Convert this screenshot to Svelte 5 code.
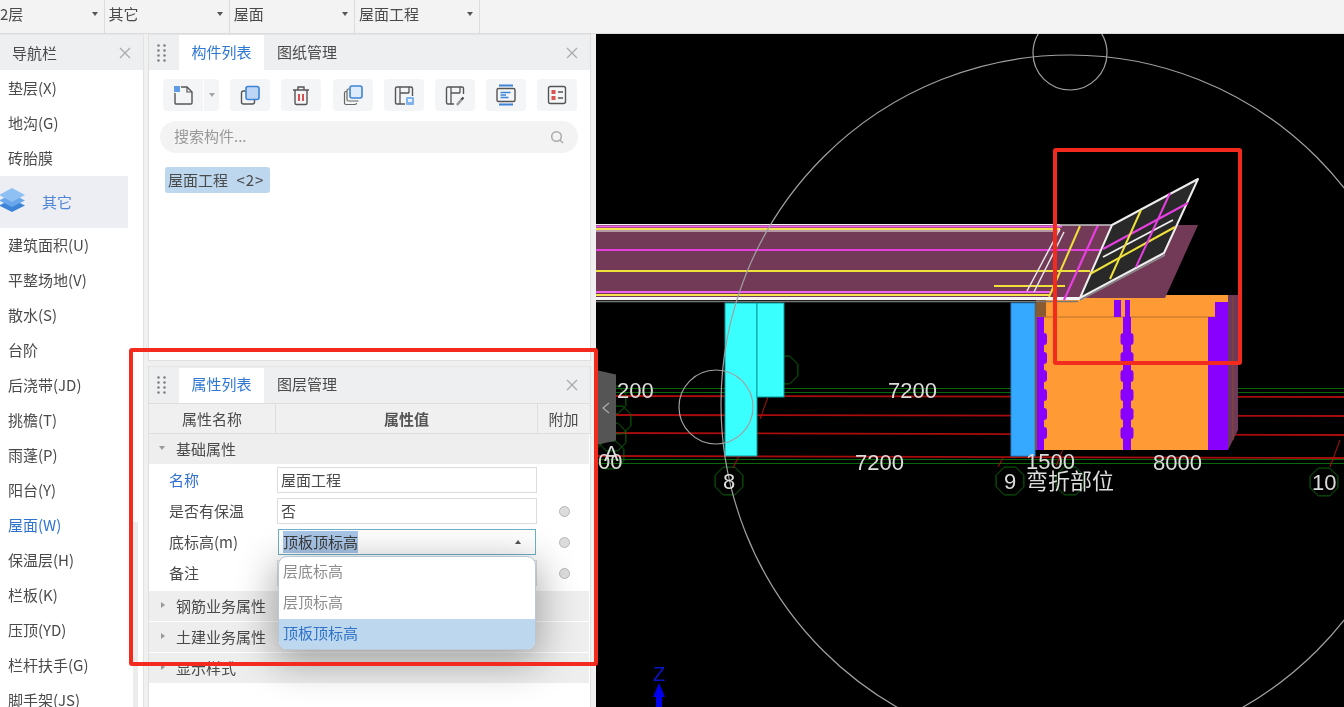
<script>
  const selectors = ['2层', '其它', '屋面', '屋面工程'];
  const navTop = ['垫层(X)', '地沟(G)', '砖胎膜'];
  const navBottom = ['建筑面积(U)', '平整场地(V)', '散水(S)', '台阶', '后浇带(JD)', '挑檐(T)', '雨蓬(P)', '阳台(Y)', '屋面(W)', '保温层(H)', '栏板(K)', '压顶(YD)', '栏杆扶手(G)', '脚手架(JS)'];
  const lowerSections = ['钢筋业务属性', '土建业务属性', '显示样式'];
  const options = ['层底标高', '层顶标高', '顶板顶标高'];
  const beads = [333, 352, 370, 389, 408, 427];
  const redLines = [[396, 397], [415, 416], [433, 435], [456, 458]];
  const greenLines = [388.5, 392.5, 459.5, 463.5];
  const hexagons = [[612, 400], [617, 420], [612, 437], [610, 455], [784, 370], [729, 481], [1010, 481], [1070, 481], [1324, 482]];
  const hexPoints = ([cx, cy]) => Array.from({ length: 8 }, (_, i) => {
    const a = (Math.PI / 4) * i + Math.PI / 8;
    return `${(cx + 15 * Math.cos(a)).toFixed(1)},${(cy + 15 * Math.sin(a)).toFixed(1)}`;
  }).join(' ');
  const gripDots = [0, 1, 2, 3].flatMap((r) => [0, 1].map((c) => [1.5 + c * 6, 1.5 + r * 5]));
</script>

{#snippet closeIcon()}
  <svg class="close" width="12" height="12" viewBox="0 0 12 12" fill="none"><path d="M1 1l10 10M11 1L1 11" stroke="#aaa" stroke-width="1.3"/></svg>
{/snippet}

{#snippet grip()}
  <span class="grip">
    <svg width="9" height="18" viewBox="0 0 9 18">
      {#each gripDots as [x, y]}<circle cx={x} cy={y} r="1.3" fill="#808080"/>{/each}
    </svg>
  </span>
{/snippet}

<div class="app">
  <header class="selectors">
    {#each selectors as name, i}
      <div class="selector" class:first={i === 0}>
        <span>{name}</span><i class="arrow"></i>
      </div>
    {/each}
  </header>

  <div class="workspace">
    <nav class="nav">
      <div class="nav-head"><span>导航栏</span>{@render closeIcon()}</div>
      <ul>
        {#each navTop as item}<li>{item}</li>{/each}
        <li class="group">
          <svg width="28" height="28" viewBox="0 0 28 28" class="layers">
            <path d="M12 12 L25 18.5 L12 25 L-1 18.5Z" fill="#3d84d8"/>
            <path d="M12 7 L25 13.5 L12 20 L-1 13.5Z" fill="#6aa6ea"/>
            <path d="M12 1 L25 8 L12 15 L-1 8Z" fill="#8fc0f3"/>
          </svg>
          <span>其它</span>
        </li>
        {#each navBottom as item}
          <li class:current={item === '屋面(W)'}>{item}</li>
        {/each}
      </ul>
      <div class="scroll-thumb"></div>
    </nav>

    <div class="panels">
      <section class="panel upper">
        <div class="panel-head">
          {@render grip()}
          <span class="tab active">构件列表</span>
          <span class="tab">图纸管理</span>
          {@render closeIcon()}
        </div>
        <div class="tools">
          <div class="tool split">
            <span class="tool-main">
              <svg width="22" height="22" viewBox="0 0 22 22" fill="none">
                <path d="M9 3h6l5 5v11a1 1 0 0 1-1 1H4a1 1 0 0 1-1-1V9" stroke="#555" stroke-width="1.4"/>
                <path d="M15 3v5h5" stroke="#555" stroke-width="1.2"/>
                <rect x="2" y="2" width="6" height="6" fill="#5f9be6"/>
              </svg>
            </span>
            <span class="tool-drop"><i class="arrow gray"></i></span>
          </div>
          <div class="tool">
            <svg width="22" height="22" viewBox="0 0 22 22" fill="none">
              <rect x="2.5" y="7" width="13" height="13" rx="2" stroke="#555" stroke-width="1.4"/>
              <rect x="7" y="2.5" width="13" height="13" rx="2" fill="#bdd6f5" stroke="#3d84d8" stroke-width="1.6"/>
            </svg>
          </div>
          <div class="tool">
            <svg width="22" height="22" viewBox="0 0 22 22" fill="none">
              <path d="M3 6h16M8 6V3h6v3M5 6v13a1.5 1.5 0 0 0 1.5 1.5h9A1.5 1.5 0 0 0 17 19V6" stroke="#555" stroke-width="1.4"/>
              <path d="M9 10v7M13 10v7" stroke="#d33f3f" stroke-width="1.8"/>
            </svg>
          </div>
          <div class="tool">
            <svg width="22" height="22" viewBox="0 0 22 22" fill="none">
              <path d="M5 7.5H4A1.5 1.5 0 0 0 2.5 9v10A1.5 1.5 0 0 0 4 20.5h9a1.5 1.5 0 0 0 1.5-1.5" stroke="#666" stroke-width="1.2"/>
              <path d="M7.5 5H6.5A1.5 1.5 0 0 0 5 6.5v9A1.5 1.5 0 0 0 6.5 17h10" stroke="#666" stroke-width="1.2"/>
              <rect x="8" y="2" width="12" height="12" rx="2" fill="#deebfb" stroke="#3d84d8" stroke-width="1.6"/>
            </svg>
          </div>
          <div class="tool">
            <svg width="22" height="22" viewBox="0 0 22 22" fill="none">
              <path d="M12 20H4a1.5 1.5 0 0 1-1.5-1.5v-14A1.5 1.5 0 0 1 4 3h14a1.5 1.5 0 0 1 1.5 1.5V12" stroke="#555" stroke-width="1.4"/>
              <path d="M7 3v17M7 9h9M16 3v6" stroke="#555" stroke-width="1.3"/>
              <rect x="13" y="13" width="8" height="8" rx="1" fill="#7fb2ee"/>
              <rect x="15" y="15" width="4" height="3" fill="#e8f1fc"/>
            </svg>
          </div>
          <div class="tool">
            <svg width="22" height="22" viewBox="0 0 22 22" fill="none">
              <path d="M10 20H4a1.5 1.5 0 0 1-1.5-1.5v-14A1.5 1.5 0 0 1 4 3h14a1.5 1.5 0 0 1 1.5 1.5V10" stroke="#555" stroke-width="1.4"/>
              <path d="M7 3v17M7 9h9M16 3v6" stroke="#555" stroke-width="1.3"/>
              <path d="M13 21l5-6" stroke="#9a9a9a" stroke-width="2.6"/>
              <path d="M17.5 15.5l2-2" stroke="#444" stroke-width="2.2"/>
            </svg>
          </div>
          <div class="tool">
            <svg width="22" height="22" viewBox="0 0 22 22" fill="none">
              <path d="M4 1.5h14M4 20.5h14" stroke="#3d84d8" stroke-width="1.8"/>
              <rect x="2" y="4.5" width="18" height="13" rx="1.5" stroke="#555" stroke-width="1.4"/>
              <path d="M5.5 8.5h10M5.5 11h5.5M5.5 13.5h8" stroke="#3d84d8" stroke-width="1.3"/>
            </svg>
          </div>
          <div class="tool">
            <svg width="22" height="22" viewBox="0 0 22 22" fill="none">
              <rect x="2.5" y="2.5" width="17" height="17" rx="2" stroke="#555" stroke-width="1.4"/>
              <rect x="5.5" y="6" width="4" height="4" fill="#d9534f"/>
              <rect x="5.5" y="12" width="4" height="4" fill="#d9534f"/>
              <path d="M12 8h5M12 14h5" stroke="#555" stroke-width="1.3"/>
            </svg>
          </div>
        </div>
        <div class="search">
          <span>搜索构件...</span>
          <svg width="14" height="14" viewBox="0 0 14 14" fill="none">
            <circle cx="6.5" cy="6.5" r="4.8" stroke="#aaa" stroke-width="1.5"/>
            <path d="M10 10l3 3" stroke="#aaa" stroke-width="1.5"/>
          </svg>
        </div>
        <div class="chip-row"><span class="chip">屋面工程 <span class="count">&lt;2&gt;</span></span></div>
      </section>

      <section class="panel lower">
        <div class="panel-head">
          {@render grip()}
          <span class="tab active">属性列表</span>
          <span class="tab">图层管理</span>
          {@render closeIcon()}
        </div>
        <div class="table-head">
          <div class="c1">属性名称</div>
          <div class="c2">属性值</div>
          <div class="c3">附加</div>
        </div>
        <div class="section-row tall"><i class="tri down"></i>基础属性</div>

        <div class="props">
          <div class="prop"><label class="link">名称</label><div class="field">屋面工程</div></div>
          <div class="prop"><label>是否有保温</label><div class="field">否</div><i class="dot"></i></div>
          <div class="prop">
            <label>底标高(m)</label>
            <div class="field focus"><mark>顶板顶标高</mark><i class="arrow up"></i></div>
            <i class="dot"></i>
            <div class="menu">
              {#each options as opt, i}
                <div class="option" class:selected={i === 2}>{opt}</div>
              {/each}
            </div>
          </div>
          <div class="prop"><label>备注</label><div class="field blank"></div><i class="dot"></i></div>
        </div>

        {#each lowerSections as s}
          <div class="section-row"><i class="tri"></i>{s}</div>
        {/each}
      </section>
    </div>

    <main class="canvas">
      <div class="handle">
        <svg width="10" height="14" viewBox="0 0 10 14" fill="none"><path d="M8 2L2 7l6 5" stroke="#aaa" stroke-width="1.3"/></svg>
      </div>
      <svg class="drawing" width="748" height="673" viewBox="596 34 748 673">
        <rect x="596" y="34" width="748" height="673" fill="#000"/>

        {#each greenLines as y}
          <line x1="596" y1={y} x2="1344" y2={y} stroke="#0a660a" stroke-width="1.2"/>
        {/each}
        {#each redLines as [a, b]}
          <line x1="596" y1={a} x2="1344" y2={b} stroke="#a80c0c" stroke-width="1.8"/>
        {/each}
        {#each hexagons as h}
          <polygon points={hexPoints(h)} fill="none" stroke="#0a6a0a" stroke-width="1"/>
        {/each}
        <path d="M739 456l-6 12M1340 440l-10 27M1063 449l-7 17M1003 458l-5 9M768 397l-8 22" stroke="#b01010" stroke-width="1"/>

        <!-- cyan columns -->
        <rect x="725" y="303" width="32" height="153" fill="#39ffff" stroke="#0a9a9a" stroke-width="1"/>
        <rect x="757" y="303" width="27" height="94" fill="#39ffff" stroke="#0a9a9a" stroke-width="1"/>

        <!-- box -->
        <polygon points="1228,295 1238,295 1238,430 1228,450" fill="#6d3a5c"/>
        <path d="M1233 296V440" stroke="#8a4a2a" stroke-width="1"/>
        <rect x="1036" y="295" width="192" height="155" fill="#ff9a35"/>
        <rect x="1036" y="300" width="10" height="17" fill="#8a5a30"/>
        <line x1="1036" y1="317" x2="1228" y2="317" stroke="#b9702a" stroke-width="1"/>
        <rect x="1011" y="303" width="24" height="153" fill="#35a9ff" stroke="#2383c8" stroke-width="1"/>
        <rect x="1035" y="303" width="2" height="147" fill="#7a5a3a"/>
        <rect x="1208" y="317" width="20" height="133" fill="#8a00ff"/>
        <rect x="1215" y="302" width="13" height="15" fill="#8a00ff"/>
        <rect x="1114" y="300" width="7" height="17" fill="#8a00ff"/>
        <rect x="1125" y="300" width="5" height="17" fill="#8a00ff"/>
        <rect x="1037" y="317" width="7" height="133" fill="#8a00ff"/>
        <rect x="1123" y="317" width="8" height="133" fill="#8a00ff"/>
        {#each beads as y}
          <rect x="1037" y={y} width="10" height="12" rx="3" fill="#8a00ff"/>
          <rect x="1120.5" y={y} width="13" height="12" rx="3" fill="#8a00ff"/>
        {/each}

        <!-- roof slab -->
        <polygon points="596,225 1198,225 1165,298 1080,298 1076,300 596,300" fill="#733a58"/>
        <path d="M596 224.5H1060" stroke="#f0f0f0" stroke-width="1"/>
        <path d="M596 226.5H1062" stroke="#f062ea" stroke-width="2"/>
        <path d="M596 229H1060" stroke="#f5e34a" stroke-width="2"/>
        <path d="M596 231H1060" stroke="#f4f4f4" stroke-width="1"/>
        <path d="M596 250H1100" stroke="#e63fe0" stroke-width="2"/>
        <path d="M596 271H1090" stroke="#efe13c" stroke-width="2"/>
        <path d="M994 286H1065" stroke="#efe13c" stroke-width="2"/>
        <path d="M596 292H1050" stroke="#f062ea" stroke-width="2"/>
        <path d="M596 295H1050" stroke="#f5e34a" stroke-width="2"/>
        <path d="M596 298.5H1080" stroke="#f4f4f4" stroke-width="3"/>
        <path d="M596 301.5H1078" stroke="#777" stroke-width="1.5"/>
        <path d="M1027 291L1060 229M1034 292L1064 232" stroke="#e6e6e6" stroke-width="1.5" fill="none"/>
        <path d="M1049 297L1080 226" stroke="#efe13c" stroke-width="2"/>
        <path d="M1064 300L1098 225" stroke="#e63fe0" stroke-width="2.2"/>
        <path d="M1056 225H1112" stroke="#c9c9c9" stroke-width="1.5"/>

        <!-- inclined panel -->
        <polygon points="1198,179 1164,253 1080,298 1112,225" fill="#292929" stroke="#eeeeee" stroke-width="2" stroke-linejoin="round"/>
        <path d="M1080 300L1165 255" stroke="#888" stroke-width="1.5"/>
        <path d="M1103 249L1188 203" stroke="#e63fe0" stroke-width="2"/>
        <path d="M1090 274L1175 227" stroke="#efe13c" stroke-width="2"/>
        <path d="M1103 257L1173 220" stroke="#f0f0f0" stroke-width="1.8"/>
        <path d="M1110 279L1141 210" stroke="#efe13c" stroke-width="2"/>
        <path d="M1136 267L1170 193" stroke="#e63fe0" stroke-width="2"/>

        <!-- reference circles -->
        <circle cx="1070" cy="404" r="349" fill="none" stroke="#a0a0a0" stroke-width="1.2"/>
        <circle cx="1070" cy="53" r="37" fill="none" stroke="#a0a0a0" stroke-width="1.2"/>
        <circle cx="716" cy="407" r="37" fill="none" stroke="#a0a0a0" stroke-width="1.2"/>

        <!-- labels -->
        <g class="cad">
          <text x="617" y="398">200</text>
          <text x="888" y="398">7200</text>
          <text x="855" y="470">7200</text>
          <text x="1026" y="469">1500</text>
          <text x="1153" y="470">8000</text>
          <text x="598" y="469">00</text>
          <text x="604" y="461">A</text>
          <text x="723" y="489">8</text>
          <text x="1004" y="489">9</text>
          <text x="1312" y="490">10</text>
          <text x="1026" y="489" class="zh">弯折部位</text>
        </g>

        <!-- axis -->
        <text x="653" y="681" class="axis">Z</text>
        <polygon points="659,683 653,697 665,697" fill="#0000ee"/>
        <rect x="656" y="697" width="6" height="10" fill="#0000ee"/>
      </svg>
    </main>
  </div>

  <div class="callout one"></div>
  <div class="callout two"></div>
</div>

<style>
  :global(body) { margin: 0; }
  .app {
    position: relative;
    width: 1344px;
    height: 707px;
    overflow: hidden;
    display: flex;
    flex-direction: column;
    background: #f0f0f0;
    color: #4a4a4a;
    font: 15px "Noto Sans CJK SC", "Noto Sans", sans-serif;
    filter: blur(0.35px);
  }
  .selectors {
    height: 34px;
    flex: none;
    display: flex;
    background: #f3f3f3;
    border-bottom: 1px solid #dcdcdc;
    box-sizing: border-box;
  }
  .selector {
    width: 125.3px;
    box-sizing: border-box;
    display: flex;
    align-items: center;
    justify-content: space-between;
    padding: 0 6px 7px 4px;
    border-right: 1px solid #dcdcdc;
  }
  .selector.first { width: 104.5px; padding-left: 0; }
  .selector .arrow { margin-top: 2px; }
  .arrow {
    width: 0;
    height: 0;
    border: 3.5px solid transparent;
    border-top: 4px solid #555;
    border-bottom: 0;
  }
  .arrow.gray { border-top-color: #a5a5a5; }
  .arrow.up { border-top: 0; border-bottom: 4px solid #555; }

  .workspace { flex: 1; display: flex; min-height: 0; }

  .nav {
    position: relative;
    width: 143px;
    flex: none;
    background: #fff;
    border-right: 1px solid #e2e2e2;
    overflow: hidden;
  }
  .nav-head {
    height: 36px;
    background: #eeeff1;
    display: flex;
    align-items: center;
    justify-content: space-between;
    padding: 0 12px;
    border-top: 1px solid #e6e6e6;
    box-sizing: border-box;
  }
  .close { flex: none; }
  .nav ul { list-style: none; margin: 0; padding: 1px 0 0; }
  .nav li { height: 35px; line-height: 33px; padding-left: 8px; white-space: nowrap; }
  .nav li.current { color: #2f73d0; }
  .nav li.group {
    height: 52px;
    width: 128px;
    box-sizing: border-box;
    padding-left: 0;
    background: #eceef3;
    color: #4f87d6;
    display: flex;
    align-items: center;
  }
  .nav li.group span { margin-top: -2px; }
  .layers { margin: -2px 14px 0 0; flex: none; }
  .scroll-thumb {
    position: absolute;
    left: 133px;
    top: 488px;
    width: 5px;
    height: 185px;
    background: #ececec;
  }

  .panels {
    width: 443px;
    flex: none;
    margin: 0 5px 0 4px;
    display: flex;
    flex-direction: column;
    gap: 5px;
    background: #f0f0f0;
  }
  .panel { background: #fff; border: 1px solid #dfdfdf; border-top: 0; box-sizing: border-box; }
  .upper { height: 327px; }
  .lower { flex: 1; position: relative; border-bottom: 0; }
  .panel-head {
    height: 36px;
    background: #eeeff1;
    display: flex;
    align-items: center;
    border-top: 1px solid #e4e4e4;
    box-sizing: border-box;
  }
  .lower .panel-head { height: 37px; }
  .grip {
    width: 30px;
    flex: none;
    box-sizing: border-box;
    padding-left: 8px;
    display: flex;
    align-items: center;
  }
  .tab { width: 85px; height: 35px; line-height: 34px; text-align: center; flex: none; }
  .tab.active { background: #fff; color: #2f78d6; }
  .tab + .tab { width: 86px; }
  .lower .tab { line-height: 32px; }
  .panel-head .close { margin-left: auto; margin-right: 12px; }

  .tools { display: flex; gap: 11.2px; padding: 9px 0 0 14px; height: 32px; }
  .tool {
    width: 40px;
    height: 32px;
    border-radius: 4px;
    background: #f4f5f6;
    display: flex;
    align-items: center;
    justify-content: center;
  }
  .tool.split { width: 56px; background: none; gap: 1px; }
  .tool-main {
    width: 40px;
    height: 32px;
    background: #f4f5f6;
    border-radius: 4px 0 0 4px;
    display: flex;
    align-items: center;
    justify-content: center;
  }
  .tool-drop {
    width: 15px;
    height: 32px;
    background: #f4f5f6;
    border-radius: 0 4px 4px 0;
    display: flex;
    align-items: center;
    justify-content: center;
  }
  .search {
    margin: 10px 12px 0 11px;
    height: 32px;
    border-radius: 16px;
    background: #f3f3f4;
    color: #999;
    display: flex;
    align-items: center;
    justify-content: space-between;
    padding: 0 14px;
    line-height: 30px;
  }
  .search span { margin-top: -2px; }
  .chip-row { padding: 14px 0 0 16px; }
  .chip {
    display: inline-block;
    width: 105px;
    box-sizing: border-box;
    height: 26px;
    line-height: 25px;
    padding-left: 3px;
    background: #bdd7ef;
    border-radius: 3px;
    white-space: pre;
    word-spacing: 5px;
  }
  .count { letter-spacing: 1px; }

  .table-head {
    display: flex;
    height: 31px;
    background: #f0f0f0;
    border-top: 1px solid #dedede;
    border-bottom: 1px solid #dedede;
    box-sizing: border-box;
    line-height: 29px;
    text-align: center;
  }
  .c1 { width: 126px; border-right: 1px solid #dedede; }
  .c2 { width: 262px; border-right: 1px solid #dedede; font-weight: 700; color: #555; box-sizing: border-box; }
  .c3 { width: 51px; }
  .section-row {
    height: 30px;
    margin: 0 1px 1px 0;
    background: #eeeeee;
    display: flex;
    align-items: center;
    padding: 0 0 2px 27px;
    position: relative;
    box-sizing: border-box;
  }
  .section-row.tall { margin-bottom: 0; }
  .tri {
    position: absolute;
    left: 12px;
    top: 11px;
    width: 0;
    height: 0;
    border: 3.5px solid transparent;
    border-left: 4px solid #999;
    border-right: 0;
  }
  .tri.down {
    border: 3.5px solid transparent;
    border-top: 4px solid #999;
    border-bottom: 0;
    top: 12px;
    left: 10px;
  }

  .props { padding: 1px 0 2px; }
  .prop {
    position: relative;
    height: 31px;
    box-sizing: border-box;
    padding-bottom: 2px;
    display: flex;
    align-items: center;
  }
  .prop label { width: 128px; padding-left: 20px; box-sizing: border-box; flex: none; }
  .prop label.link { color: #2f6fd6; }
  .field {
    width: 260px;
    height: 26px;
    flex: none;
    box-sizing: border-box;
    border: 1px solid #dcdcdc;
    background: #fff;
    padding-left: 3px;
    line-height: 24px;
    display: flex;
    align-items: center;
  }
  .field.focus {
    border-color: #6fb0c9;
    padding-left: 4px;
    margin-left: 1px;
    width: 258px;
    position: relative;
    z-index: 2;
  }
  .field.focus .arrow { margin-left: auto; margin-right: 14px; }
  mark { background: #a9c6e8; color: #3a3a3a; line-height: 22px; }
  .dot {
    position: absolute;
    left: 410px;
    margin-top: 2px;
    width: 9px;
    height: 9px;
    border-radius: 50%;
    background: #dcdcdc;
    border: 1px solid #b8b8b8;
  }
  .menu {
    position: absolute;
    left: 129px;
    top: 29px;
    width: 258px;
    height: 94px;
    box-sizing: border-box;
    background: #fff;
    border: 1px solid #b8c8d6;
    border-radius: 9px;
    overflow: hidden;
    z-index: 3;
    box-shadow: 0 10px 38px 4px rgba(0, 0, 0, 0.32);
  }
  .option { height: 31px; line-height: 28px; padding-left: 4px; color: #8c8c8c; }
  .option.selected { background: #bdd7ef; color: #2f73c8; }

  .canvas { flex: 1; position: relative; background: #000; min-width: 0; }
  .drawing { display: block; }
  .handle {
    position: absolute;
    left: 0;
    top: 336px;
    width: 20px;
    height: 75px;
    background: #555;
    clip-path: polygon(0 0, 100% 6%, 100% 94%, 0 100%);
    display: flex;
    align-items: center;
    justify-content: center;
    z-index: 2;
  }
  .cad text {
    fill: #dcdcdc;
    font: 22px "Liberation Sans", sans-serif;
  }
  .cad text.zh { font: 22px "Noto Sans CJK SC", sans-serif; }
  .axis { fill: #0a14c8; font: 20px "Liberation Sans", sans-serif; }

  .callout {
    position: absolute;
    box-sizing: border-box;
    border: 4px solid #f32a1e;
    border-radius: 3px;
    pointer-events: none;
    z-index: 5;
  }
  .callout.one { left: 129px; top: 348px; width: 469px; height: 318px; }
  .callout.two { left: 1053px; top: 148px; width: 189px; height: 217px; }
</style>
